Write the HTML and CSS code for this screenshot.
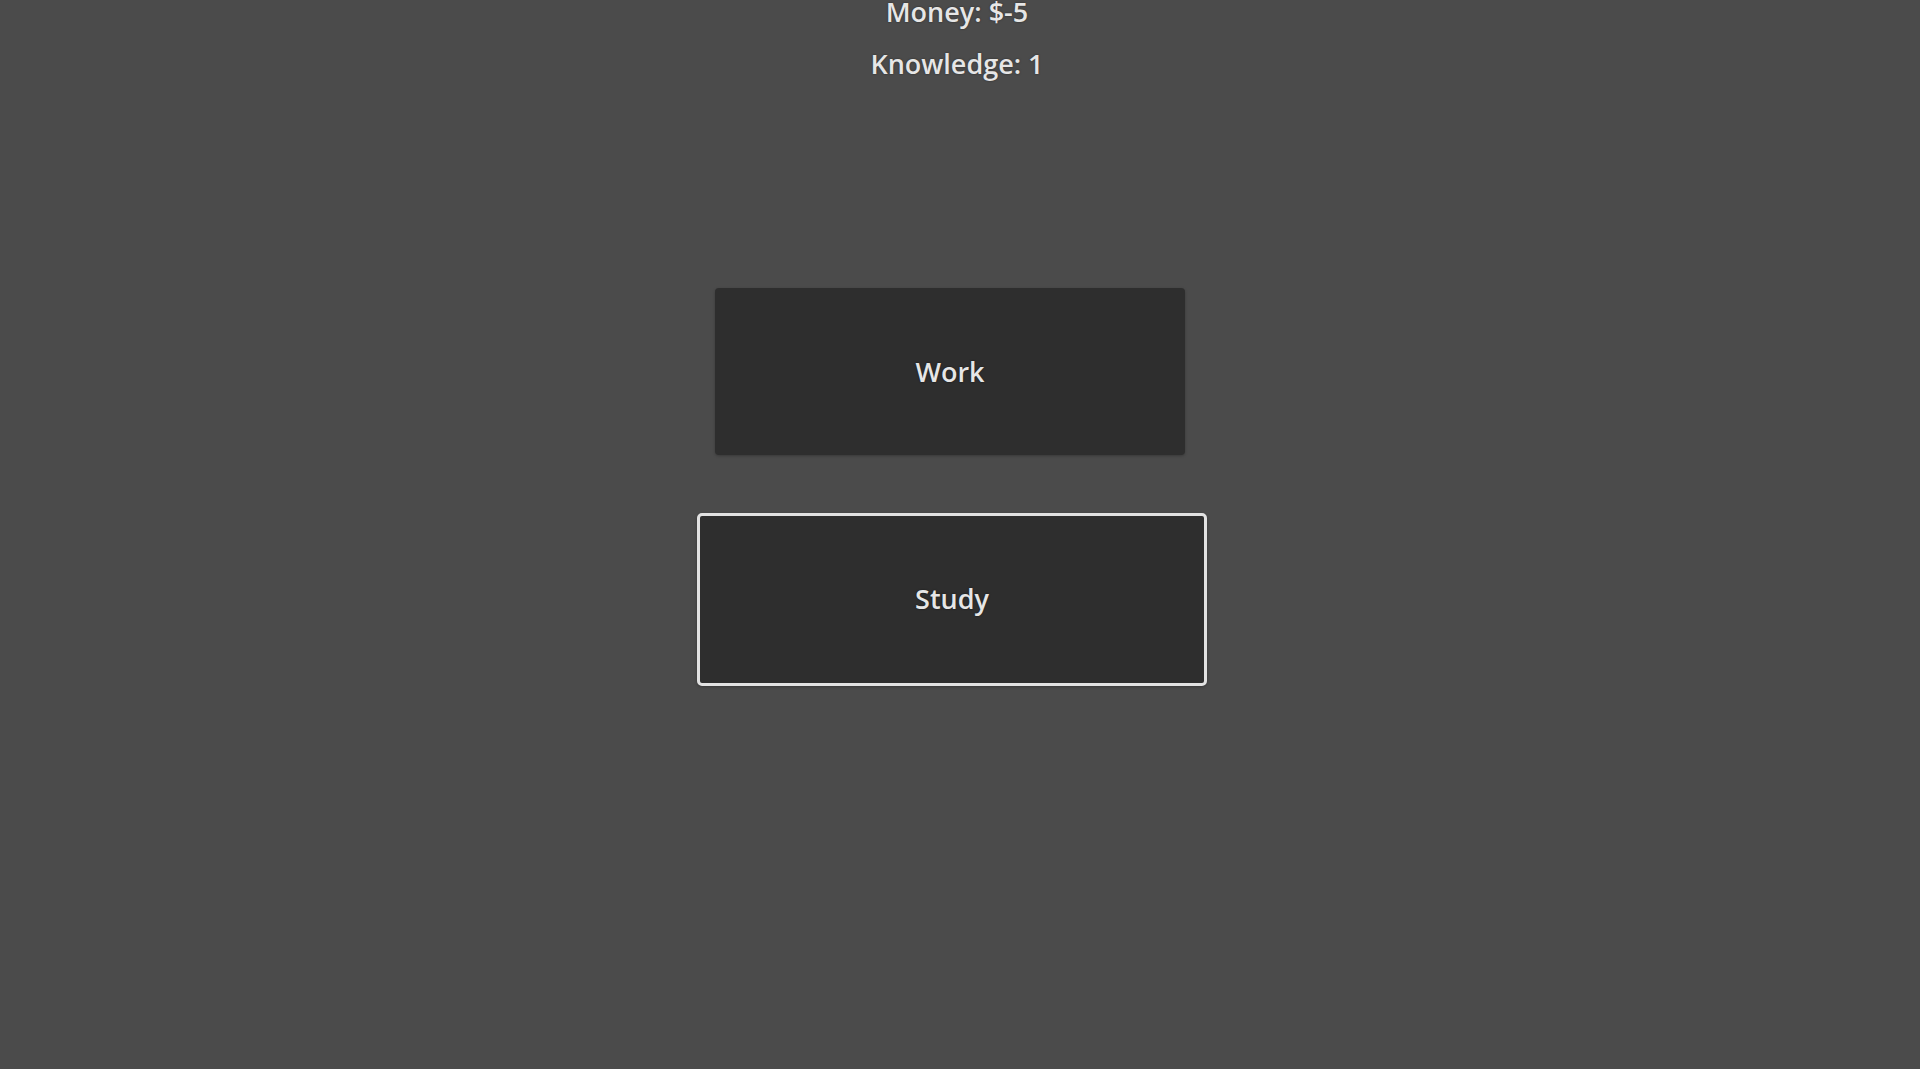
FILE: index.html
```html
<!DOCTYPE html>
<html lang="en">
<head>
    <meta charset="UTF-8">
    <meta name="viewport" content="width=device-width, initial-scale=1.0">
    <title>Life Game</title>
    <link rel="stylesheet" href="styles.css">
</head>
<body>
    <!-- Stats -->
    <div class="stats">
        <p class="stat">Money: $-5</p>
        <p class="stat">Knowledge: 1</p>
    </div>

    <!-- Actions -->
    <div class="actions">
        <button class="action">Work</button>
        <button class="action selected">Study</button>
    </div>
</body>
</html>
```

FILE: styles.css
```css
/* General Reset */
* {
    margin: 0;
    padding: 0;
    box-sizing: border-box;
}

html, body {
    height: 100%;
}

body {
    font-family: 'Open Sans', 'Noto Sans', sans-serif;
    background-color: #4b4b4b;
    color: #e6e6e6;
    display: flex;
    flex-direction: column;
    align-items: center;
}

/* Stats */
.stats {
    display: flex;
    flex-direction: column;
    align-items: center;
    gap: 16px;
    margin-top: -6px;
    padding-right: 6px;
}

.stat {
    font-size: 27px;
    font-weight: 600;
    line-height: 36px;
    text-shadow: 0 0 2px rgba(0, 0, 0, 0.5);
}

/* Action buttons */
.actions {
    display: flex;
    flex-direction: column;
    align-items: center;
    gap: 58px;
    margin-top: 206px;
}

.action {
    width: 470px;
    height: 167px;
    background: #2e2e2e;
    color: #e6e6e6;
    border: none;
    border-radius: 4px;
    font-family: inherit;
    font-size: 27px;
    font-weight: 600;
    text-shadow: 0 0 2px rgba(0, 0, 0, 0.6);
    box-shadow: 0 1px 3px rgba(0, 0, 0, 0.25);
    cursor: pointer;
    margin-left: -20px;
}

.action.selected {
    width: 510px;
    height: 173px;
    border: 3px solid #e2e2e2;
    border-radius: 5px;
    margin-left: -16px;
    padding-bottom: 2px;
}
```
